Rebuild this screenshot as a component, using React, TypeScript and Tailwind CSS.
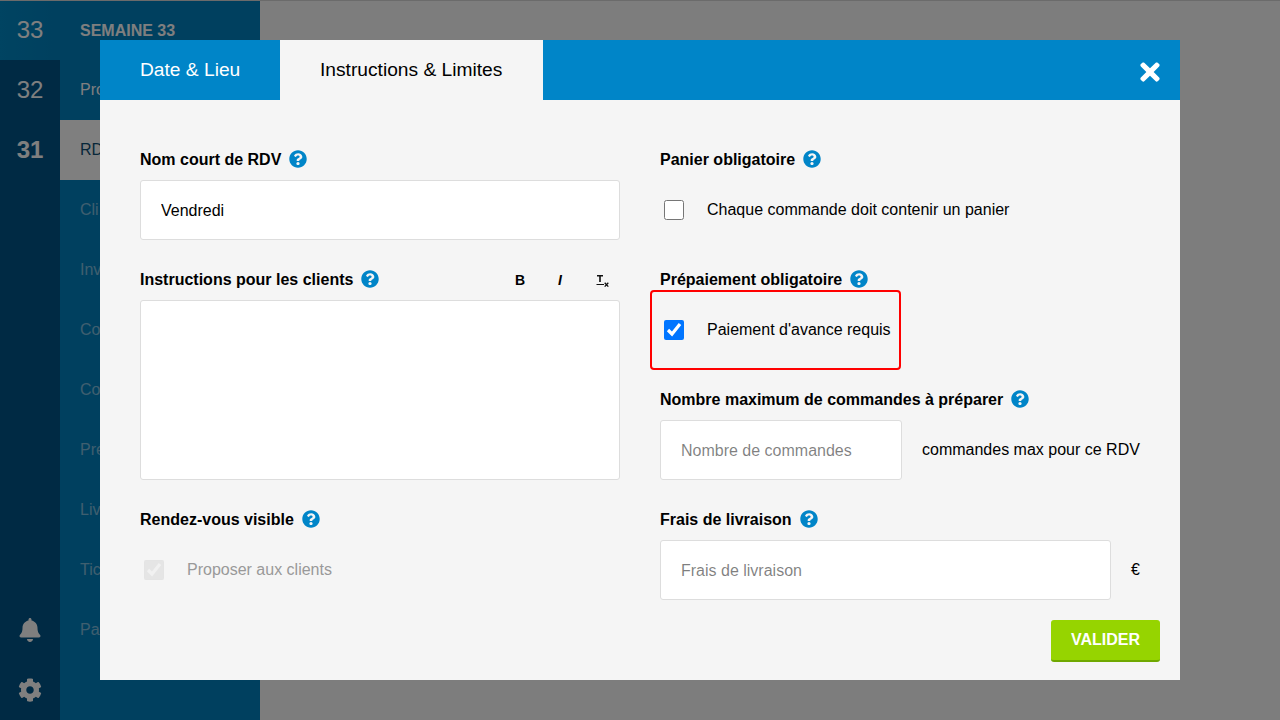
import { FaBell, FaCog, FaQuestionCircle, FaTimes } from 'react-icons/fa'

const sans = 'font-["Liberation_Sans",Arial,sans-serif]'

const navItems = ['Pro', 'RD', 'Cli', 'Inv', 'Co', 'Co', 'Pré', 'Liv', 'Tic', 'Pa']

function FieldLabel({ text }: { text: string }) {
  return (
    <div className="flex h-[30px] items-start gap-2 text-base font-bold leading-[19px] text-black">
      <span>{text}</span>
      <FaQuestionCircle size={18} className="text-[#0085c8]" />
    </div>
  )
}

function TextInput({ placeholder, value }: { placeholder?: string; value?: string }) {
  return (
    <input
      type="text"
      placeholder={placeholder}
      defaultValue={value}
      className="h-[60px] w-full min-w-0 rounded-[3px] border border-[#dddddd] bg-white px-5 pt-0.5 text-base text-black outline-none"
    />
  )
}

function CheckRow({ label, checked, disabled }: { label: string; checked?: boolean; disabled?: boolean }) {
  return (
    <label className="flex h-[60px] items-center">
      <input type="checkbox" defaultChecked={checked} disabled={disabled} className={`ml-1 h-5 w-5 ${disabled ? 'opacity-40' : ''}`} />
      <span className={`ml-[23px] whitespace-nowrap text-base ${disabled ? 'text-[#999999]' : 'text-black'}`}>{label}</span>
    </label>
  )
}

function Sidebar() {
  return (
    <div className="flex h-full w-[260px] shrink-0 bg-[#0080be]">
      <div className="flex w-[60px] flex-col bg-[#005489] text-2xl text-white">
        <div className="flex h-[60px] items-center justify-center bg-gradient-to-r from-[#0088c4] to-[#0080be]">33</div>
        <div className="flex h-[60px] items-center justify-center">32</div>
        <div className="flex h-[60px] items-center justify-center font-bold">31</div>
        <div className="mt-auto flex h-[60px] items-center justify-center">
          <FaBell size={24} />
        </div>
        <div className="flex h-[60px] items-center justify-center">
          <FaCog size={24} />
        </div>
      </div>
      <div className="flex flex-1 flex-col text-base">
        <div className="flex h-[60px] items-center px-5 pt-0.5 font-bold text-white">SEMAINE 33</div>
        {navItems.map((item, i) => (
          <div
            key={i}
            className={`flex h-[60px] items-center px-5 ${
              i === 1 ? 'bg-white text-[#0f4f75]' : i === 0 ? 'text-white' : 'text-white/50'
            }`}
          >
            {item}
          </div>
        ))}
      </div>
    </div>
  )
}

function Toolbar() {
  return (
    <div className="flex h-[30px] text-sm font-bold text-black">
      <button className="h-5 w-10 text-center leading-5">B</button>
      <button className="h-5 w-10 text-center italic leading-5">I</button>
      <button className="flex h-5 w-10 items-center justify-center">
        <svg width="14" height="14" viewBox="0 0 14 14" fill="none" stroke="#111" className="ml-1 mt-0.5">
          <path d="M2 1.8h6M5 1.8V8" strokeWidth="1.6" />
          <path d="M1.5 10.5h7.5" strokeWidth="1" />
          <path d="M9.7 8.8l3.6 3.8M13.3 8.8l-3.6 3.8" strokeWidth="1.3" />
        </svg>
      </button>
    </div>
  )
}

export default function App() {
  return (
    <div className={`relative flex h-screen w-full overflow-hidden bg-[#fafafa] ${sans}`}>
      <Sidebar />
      <div className="absolute inset-0 border-t border-[#6b6b6b] bg-black/50" />

      <div className="absolute left-[100px] top-10 flex h-[640px] w-[1080px] flex-col bg-[#f5f5f5]">
        <div className="flex h-[60px] shrink-0 items-center bg-[#0085c8] text-[19.2px]">
          <div className="flex h-full w-[180px] items-center whitespace-nowrap px-10 text-white">Date &amp; Lieu</div>
          <div className="flex h-full w-[263px] items-center whitespace-nowrap bg-[#f5f5f5] px-10 text-black">Instructions &amp; Limites</div>
          <button className="ml-auto mr-4 mt-[3px] text-white">
            <FaTimes size={28} />
          </button>
        </div>

        <div className="grid grid-cols-2 gap-x-10 px-10 pt-[50px]">
          <div className="flex flex-col">
            <FieldLabel text="Nom court de RDV" />
            <TextInput value="Vendredi" />

            <div className="mt-[30px] flex justify-between">
              <FieldLabel text="Instructions pour les clients" />
              <Toolbar />
            </div>
            <div className="h-[180px] rounded-[3px] border border-[#dddddd] bg-white" />

            <div className="mt-[30px]">
              <FieldLabel text="Rendez-vous visible" />
            </div>
            <CheckRow label="Proposer aux clients" checked disabled />
          </div>

          <div className="flex flex-col">
            <FieldLabel text="Panier obligatoire" />
            <CheckRow label="Chaque commande doit contenir un panier" />

            <div className="mt-[30px]">
              <FieldLabel text="Prépaiement obligatoire" />
            </div>
            <div className="-mx-2.5 -my-2.5 w-fit rounded-[4px] border-2 border-[#ff0000] px-2 py-2">
              <CheckRow label="Paiement d'avance requis" checked />
            </div>

            <div className="mt-[30px]">
              <FieldLabel text="Nombre maximum de commandes à préparer" />
            </div>
            <div className="flex items-center gap-5">
              <div className="w-[242px] shrink-0">
                <TextInput placeholder="Nombre de commandes" />
              </div>
              <span className="whitespace-nowrap text-base text-black">commandes max pour ce RDV</span>
            </div>

            <div className="mt-[30px]">
              <FieldLabel text="Frais de livraison" />
            </div>
            <div className="flex items-center gap-5">
              <div className="min-w-0 flex-1">
                <TextInput placeholder="Frais de livraison" />
              </div>
              <span className="text-base text-black">€</span>
            </div>
          </div>
        </div>

        <div className="mt-5 flex justify-end pr-5">
          <button className="h-[42px] rounded-[3px] border-b-2 border-[#6fa800] bg-[#96d400] px-5 text-base font-bold text-white">
            VALIDER
          </button>
        </div>
      </div>
    </div>
  )
}
